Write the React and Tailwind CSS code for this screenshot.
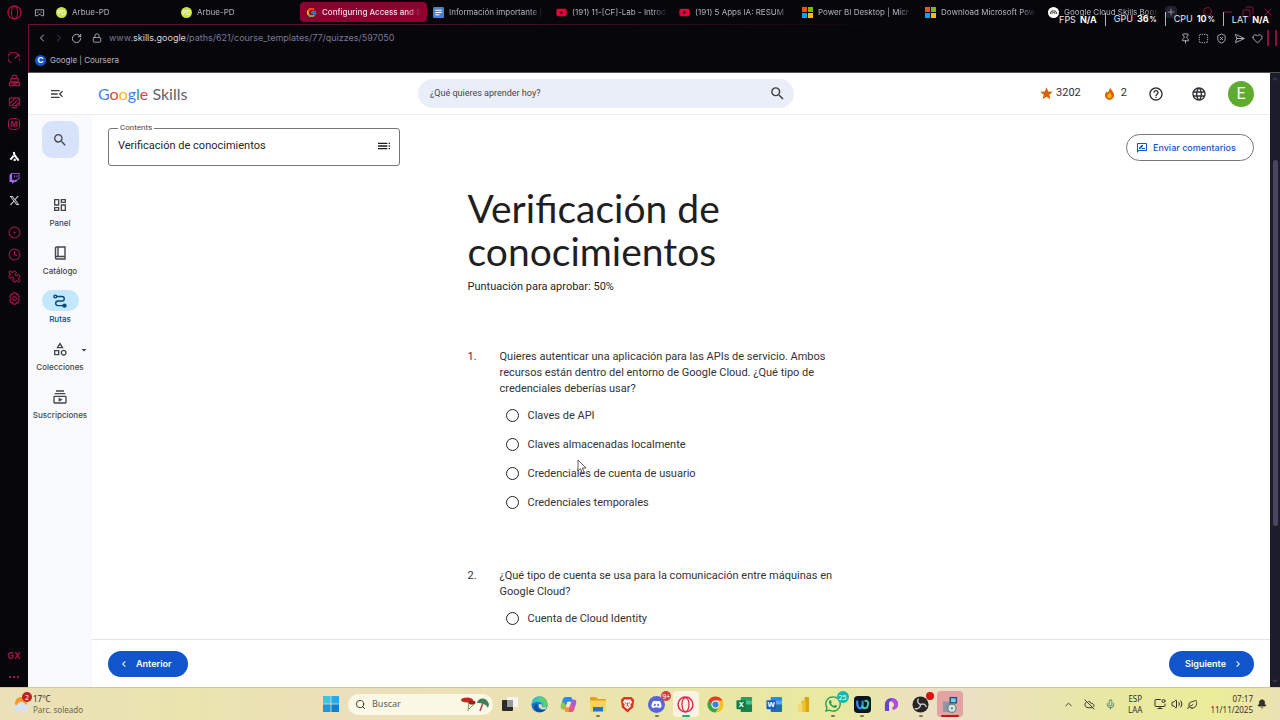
import React, { useState } from "react";
import { FcGoogle } from "react-icons/fc";
import {
  FaDiscord,
  FaWhatsapp,
  FaTwitch,
  FaXTwitter,
  FaYoutube,
} from "react-icons/fa6";
import {
  MdMenuOpen,
  MdSearch,
  MdOutlineDashboard,
  MdOutlineCategory,
  MdOutlineSubscriptions,
  MdOutlineRateReview,
  MdArrowDropDown,
  MdStar,
  MdHelpOutline,
  MdLanguage,
  MdToc,
  MdChevronLeft,
  MdChevronRight,
} from "react-icons/md";
import {
  Bell,
  ChevronDown,
  ChevronLeft,
  ChevronRight,
  ChevronUp,
  CircleDot,
  Clock,
  CloudOff,
  Copy,
  Heart,
  Leaf,
  Lock,
  Mic,
  MonitorDot,
  Minus,
  Pin,
  Plus,
  Puzzle,
  RotateCw,
  Search,
  SendHorizontal,
  Settings,
  ShieldX,
  SquareDashed,
  Volume2,
  X,
} from "lucide-react";

const ArbueIcon = () => (
  <span className="flex h-[11px] w-[11px] shrink-0 items-center justify-center rounded-full bg-[#c9e636] text-[6px] text-white">
    PD
  </span>
);

const DocsIcon = () => (
  <svg viewBox="0 0 12 12" className="h-[11px] w-[11px] shrink-0">
    <rect width="12" height="12" rx="1.5" fill="#4a7fe0" />
    <path d="M2.5 3.5h7M2.5 6h7M2.5 8.5h4.5" stroke="#fff" strokeWidth="1.2" />
  </svg>
);

const YoutubeIcon = () => (
  <FaYoutube className="h-[11px] w-[11px] shrink-0 text-[#e6003a]" />
);

const MicrosoftIcon = () => (
  <svg viewBox="0 0 11 11" className="h-[11px] w-[11px] shrink-0">
    <path fill="#f25022" d="M0 0h5v5H0z" />
    <path fill="#7fba00" d="M6 0h5v5H6z" />
    <path fill="#00a4ef" d="M0 6h5v5H0z" />
    <path fill="#ffb900" d="M6 6h5v5H6z" />
  </svg>
);

const SkillsBoostIcon = () => (
  <svg viewBox="0 0 12 12" className="h-[11px] w-[11px] shrink-0">
    <circle cx="6" cy="6" r="6" fill="#fff" />
    <path
      d="M2.5 7.500a3.500 3.500 0 0 1 7 0M4.300 7.500a1.700 1.700 0 0 1 3.400 0"
      fill="none"
      stroke="#222"
      strokeWidth="1"
    />
  </svg>
);

const OperaIcon = ({ className }) => (
  <svg viewBox="0 0 16 16" className={className} fill="none" stroke="currentColor">
    <circle cx="8" cy="8" r="7" strokeWidth="1.4" />
    <ellipse cx="8" cy="8" rx="3.300" ry="6.600" strokeWidth="1.200" />
  </svg>
);

const tabs = [
  { title: "Arbue-PD", icon: <ArbueIcon />, width: "w-[125px]" },
  { title: "Arbue-PD", icon: <ArbueIcon />, width: "w-[125px]" },
  {
    title: "Configuring Access and S",
    icon: <FcGoogle className="h-[11px] w-[11px] shrink-0" />,
    width: "w-[127px]",
    active: true,
  },
  { title: "Información importante |", icon: <DocsIcon />, width: "w-[123px]" },
  { title: "(191) 11-[CF]-Lab - Introd", icon: <YoutubeIcon />, width: "w-[123px]" },
  { title: "(191) 5 Apps IA: RESUM", icon: <YoutubeIcon />, width: "w-[123px]" },
  { title: "Power BI Desktop | Micr", icon: <MicrosoftIcon />, width: "w-[123px]" },
  { title: "Download Microsoft Pow", icon: <MicrosoftIcon />, width: "w-[123px]" },
  { title: "Google Cloud Skills Boos", icon: <SkillsBoostIcon />, width: "w-[123px]" },
];

const TabBar = () => (
  <div className="flex h-6 items-center">
    <svg
      viewBox="0 0 12 12"
      className="ml-[6px] mr-[5px] h-[11px] w-[11px] shrink-0"
      fill="none"
      stroke="#b5b5bd"
    >
      <path d="M1.500 3h9v6.500H8L6.800 8H5.200L4 9.500H1.500z" />
      <path d="M3.500 5.700h1.500M7 5.700h1.500" />
    </svg>
    {tabs.map((tab, i) => (
      <button
        key={i}
        type="button"
        className={`${tab.width} ${
          tab.active ? "bg-[#8d0030] font-medium text-[#f3dfe6]" : "text-[#b3b3bb]"
        } flex h-5 min-w-0 items-center gap-[5px] overflow-hidden rounded-sm px-[6px] text-[8px]`}
      >
        {tab.icon}
        <span className="min-w-0 flex-1 overflow-hidden whitespace-nowrap text-left [mask-image:linear-gradient(to_right,black_85%,transparent)]">
          {tab.title}
        </span>
      </button>
    ))}
    <button
      type="button"
      aria-label="Nueva pestaña"
      className="flex h-3 w-3 items-center justify-center rounded-sm bg-[#24222f] text-[#a09fae]"
    >
      <Plus className="h-[10px] w-[10px]" />
    </button>
    <div className="ml-auto flex items-center gap-2 pr-[6px] text-[#8d1237]">
      <Search className="h-3 w-3" />
      <Minus className="h-3 w-3" />
      <Copy className="h-3 w-3 -scale-x-100" />
      <X className="h-3 w-3" />
    </div>
  </div>
);

const stats = [
  ["FPS", "N/A"],
  ["GPU", "36", "%"],
  ["CPU", "10", "%"],
  ["LAT", "N/A"],
];

const StatsOverlay = () => (
  <div className="absolute right-[11px] top-3 flex items-center divide-x divide-white/70 text-[9px] leading-[13px] text-[#e8e8ea]">
    {stats.map(([label, value, unit]) => (
      <span key={label} className="flex items-baseline gap-1 px-2 last:pr-0">
        {label}
        <b className="text-white">
          {value}
          {unit && <small className="ml-px text-[7px]">{unit}</small>}
        </b>
      </span>
    ))}
  </div>
);

const AddressBar = () => (
  <div className="flex h-[26px] items-center pl-[7px] pr-[3px] text-[#b9b8c2]">
    <ChevronLeft className="h-3 w-3" />
    <ChevronRight className="ml-[5px] h-3 w-3 text-[#4c4a57]" />
    <RotateCw className="ml-[6px] h-[11px] w-[11px]" />
    <Lock className="ml-[10px] h-[10px] w-[10px]" />
    <p className="ml-[7px] flex-1 text-[9px] text-[#7a7896]">
      www.<span className="text-[#d8d7e0]">skills.google</span>
      /paths/621/course_templates/77/quizzes/597050
    </p>
    <div className="flex items-center gap-[7px]">
      <Pin className="h-[11px] w-[11px]" />
      <SquareDashed className="h-[11px] w-[11px]" />
      <ShieldX className="h-[11px] w-[11px]" />
      <SendHorizontal className="h-[11px] w-[11px]" />
      <Heart className="h-[11px] w-[11px]" />
    </div>
    <span className="ml-1 h-4 w-[2px] bg-[#8d0f3a]" />
    <span className="ml-[6px] h-4 w-[2px] bg-[#8d0f3a]" />
  </div>
);

const BrowserSidebar = () => {
  const cell = "flex h-[22px] items-center justify-center";
  return (
    <aside className="flex w-7 shrink-0 flex-col text-[#a01745]">
      <div className="flex h-6 items-center justify-center">
        <OperaIcon className="h-[15px] w-[15px] text-[#b01040]" />
      </div>
      <div className="mt-[23px]">
        <div className={cell}>
          <svg viewBox="0 0 14 14" className="h-[13px] w-[13px]" fill="none" stroke="currentColor" strokeWidth="1.2">
            <path d="M3.500 11.800A6 6 0 1 1 10 2M7 7l4.500-4M9.500 2.800h2.500v2.500M12.500 7a6 6 0 0 1-.5 2.500" />
          </svg>
        </div>
        <div className={cell}>
          <svg viewBox="0 0 14 14" className="h-[13px] w-[13px]" fill="none" stroke="currentColor" strokeWidth="1.2">
            <path d="M4 5l1-3.500h4L10 5M2.500 5h9M3 5.500v3h8v-3M1.500 12.500V9.500h11v3zM5 11h4" />
          </svg>
        </div>
        <div className={cell}>
          <svg viewBox="0 0 14 14" className="h-[13px] w-[13px]" fill="none" stroke="currentColor" strokeWidth="1.2">
            <rect x="1.500" y="2" width="11" height="8.500" rx="1.500" />
            <path d="M2 8l6-6M4 10.500L12 3M8 10.500l4.500-4M4 12.500h6" />
          </svg>
        </div>
        <div className={cell}>
          <span className="flex h-3 w-3 items-center justify-center rounded-sm border border-current text-[8px] font-bold leading-none">
            M
          </span>
        </div>
      </div>
      <div className="mt-[10px]">
        <div className={cell}>
          <svg viewBox="0 0 12 12" className="h-[11px] w-[11px]" fill="none" stroke="#fff" strokeWidth="2.2">
            <path d="M5.200 1L6 4.500l4.500 6M5 5.200L1.500 9.500M6.200 8.500v2.500" />
          </svg>
        </div>
        <div className={cell}>
          <FaTwitch className="h-[11px] w-[11px] text-[#a76bf5]" />
        </div>
        <div className={cell}>
          <FaXTwitter className="h-[11px] w-[11px] text-[#d0d0d4]" />
        </div>
      </div>
      <div className="mt-[10px]">
        <div className={cell}>
          <CircleDot className="h-[13px] w-[13px]" />
        </div>
        <div className={cell}>
          <Clock className="h-[13px] w-[13px]" />
        </div>
        <div className={cell}>
          <Puzzle className="h-[13px] w-[13px] rotate-90" />
        </div>
        <div className={cell}>
          <svg viewBox="0 0 14 14" className="h-[13px] w-[13px]" fill="none" stroke="currentColor" strokeWidth="1.2">
            <path d="M5.500 1h3l.5 1.600 1.600-.3 1.500 2.600L11 7l1.100 2.100-1.500 2.600-1.600-.3-.5 1.600h-3L5 11.400l-1.600.3-1.500-2.600L3 7 1.900 4.900l1.500-2.600 1.600.3z" />
            <circle cx="7" cy="7" r="2" />
          </svg>
        </div>
      </div>
      <div className="mt-auto text-center">
        <p className="text-[9px] font-bold leading-[22px]">GX</p>
        <div className="flex h-5 items-center justify-center gap-[2px]">
          <span className="h-[2px] w-[2px] bg-current" />
          <span className="h-[2px] w-[2px] bg-current" />
          <span className="h-[2px] w-[2px] bg-current" />
        </div>
      </div>
    </aside>
  );
};

const FlameIcon = () => (
  <svg viewBox="0 0 12 14" className="h-[13px] w-[11px]">
    <path d="M6.500 0C7 3 11 5 11 9a5 5 0 0 1-10 0c0-2 1-3.300 2-4.300l1 1.300C5 4.500 6.500 3 6.500 0z" fill="#d9630c" />
    <path d="M6.200 5.500c.3 1.500 2 2.400 2 4.300a2.300 2.300 0 0 1-4.600 0c0-1.900 2.200-2.500 2.600-4.300z" fill="#fbbc04" />
  </svg>
);

const Header = ({ query, onQueryChange }) => (
  <header className="flex h-[42px] shrink-0 items-center border-b border-[#ececee] bg-white pr-4 text-[#3c4043]">
    <div className="flex w-[390px] items-center">
      <button type="button" aria-label="Menú" className="ml-[21px]">
        <MdMenuOpen className="h-4 w-4" />
      </button>
      <a href="#" className="ml-[33px] font-['Lato',sans-serif] text-[16px] leading-[22px] text-[#5f6368]">
        <span className="text-[#4285f4]">G</span>
        <span className="text-[#ea4335]">o</span>
        <span className="text-[#fbbc04]">o</span>
        <span className="text-[#4285f4]">g</span>
        <span className="text-[#34a853]">l</span>
        <span className="text-[#ea4335]">e</span> Skills
      </a>
    </div>
    <label className="flex h-[29px] w-full max-w-[376px] items-center rounded-full bg-[#e9eef9] pl-3 pr-2">
      <input
        type="text"
        aria-label="Buscar"
        value={query}
        onChange={onQueryChange}
        placeholder="¿Qué quieres aprender hoy?"
        className="min-w-0 flex-1 bg-transparent font-['Roboto',sans-serif] text-[9px] outline-none placeholder:text-[#444746]"
      />
      <MdSearch className="h-[17px] w-[17px]" />
    </label>
    <div className="ml-auto flex items-center font-['Roboto',sans-serif] text-[11px] text-[#303134]">
      <MdStar className="h-[15px] w-[15px] text-[#d9630c]" />
      <span className="ml-[2px] mr-[23px]">3202</span>
      <FlameIcon />
      <span className="ml-[6px] mr-[21px]">2</span>
      <MdHelpOutline className="h-4 w-4" />
      <MdLanguage className="ml-[27px] h-4 w-4" />
      <span className="ml-[21px] flex h-[26px] w-[26px] items-center justify-center rounded-full bg-[#5fab2e] text-[16px] text-white">
        E
      </span>
    </div>
  </header>
);

const BookIcon = () => (
  <svg viewBox="0 0 16 16" className="h-4 w-4" fill="none" stroke="currentColor" strokeWidth="1.4">
    <path d="M3.500 12.500V3a1 1 0 0 1 1-1h8.500v9.500H4.700a1.200 1.200 0 0 0 0 2.500H13v-2.500M6 2v9.500" />
  </svg>
);

const RouteIcon = () => (
  <svg viewBox="0 0 16 16" className="h-4 w-4" fill="none" stroke="currentColor" strokeWidth="1.4">
    <path d="M4.500 3.500h5.500a2.200 2.200 0 0 1 0 4.500H6a2.300 2.300 0 0 0 0 4.600h5.500" />
    <circle cx="3.300" cy="3.500" r="1.400" />
    <circle cx="12.500" cy="12.600" r="1.500" fill="currentColor" />
  </svg>
);

const navItems = [
  { label: "Panel", icon: <MdOutlineDashboard className="h-4 w-4" /> },
  { label: "Catálogo", icon: <BookIcon /> },
  { label: "Rutas", icon: <RouteIcon />, active: true },
  { label: "Colecciones", icon: <MdOutlineCategory className="h-4 w-4" />, menu: true },
  { label: "Suscripciones", icon: <MdOutlineSubscriptions className="h-4 w-4" /> },
];

const NavRail = () => (
  <nav className="flex w-16 shrink-0 flex-col items-center bg-[#f8fafd] pt-[6px] text-[#444746]">
    <button
      type="button"
      aria-label="Buscar"
      className="flex h-[37px] w-[37px] items-center justify-center rounded-[10px] bg-[#d6e3fb]"
    >
      <MdSearch className="h-4 w-4" />
    </button>
    <ul className="mt-9 flex w-full flex-col gap-[13px]">
      {navItems.map((item) => (
        <li key={item.label}>
          <a
            href="#"
            className={`relative flex flex-col items-center gap-[3px] text-[8px] font-medium leading-[11px] ${
              item.active ? "text-[#004a77]" : ""
            }`}
          >
            <span
              className={`flex h-[21px] w-[37px] items-center justify-center rounded-full ${
                item.active ? "bg-[#c2e7ff]" : ""
              }`}
            >
              {item.icon}
            </span>
            {item.label}
            {item.menu && <MdArrowDropDown className="absolute right-[2px] top-[6px] h-3 w-3" />}
          </a>
        </li>
      ))}
    </ul>
  </nav>
);

const questions = [
  {
    text: "Quieres autenticar una aplicación para las APIs de servicio. Ambos recursos están dentro del entorno de Google Cloud. ¿Qué tipo de credenciales deberías usar?",
    options: [
      "Claves de API",
      "Claves almacenadas localmente",
      "Credenciales de cuenta de usuario",
      "Credenciales temporales",
    ],
  },
  {
    text: "¿Qué tipo de cuenta se usa para la comunicación entre máquinas en Google Cloud?",
    options: ["Cuenta de Cloud Identity"],
  },
];

const Question = ({ number, question, answer, onAnswer }) => (
  <li className="flex">
    <span className="w-8 shrink-0">{number}.</span>
    <fieldset className="max-w-[344px]">
      <legend>{question.text}</legend>
      <div className="mt-1 pl-[6px]">
        {question.options.map((option) => (
          <label key={option} className="flex h-[29px] items-center gap-[9px]">
            <input
              type="radio"
              name={`question-${number}`}
              value={option}
              checked={answer === option}
              onChange={() => onAnswer(option)}
              className="h-[13px] w-[13px] appearance-none rounded-full border border-[#222] checked:border-4 checked:border-[#1155cc]"
            />
            {option}
          </label>
        ))}
      </div>
    </fieldset>
  </li>
);

const Quiz = () => {
  const [answers, setAnswers] = useState({});

  const handleAnswer = (index, option) => {
    setAnswers((prev) => ({ ...prev, [index]: option }));
  };

  return (
    <main className="grid min-h-0 flex-1 grid-cols-[1fr_427px_1fr] overflow-hidden px-4 font-['Roboto',sans-serif]">
      <div className="pt-[7px]">
        <fieldset className="h-[44px] w-[292px] rounded-[3px] border border-[#747775] pl-[9px] pr-[7px] text-[11px] text-[#1f1f1f]">
          <legend className="px-[2px] text-[8px] leading-[12px] text-[#444746]">Contents</legend>
          <button type="button" className="flex h-6 w-full items-center justify-between">
            Verificación de conocimientos
            <MdToc className="h-4 w-4" />
          </button>
        </fieldset>
      </div>
      <div className="pt-[72px] text-[#1f1f1f]">
        <h1 className="font-['Lato',sans-serif] text-[39px] leading-[43px]">
          Verificación de conocimientos
        </h1>
        <p className="mt-[6px] text-[11px] leading-4">Puntuación para aprobar: 50%</p>
        <ol className="mt-[54px] flex flex-col gap-[51px] text-[11px] leading-4 text-[#333]">
          {questions.map((question, i) => (
            <Question
              key={i}
              number={i + 1}
              question={question}
              answer={answers[i]}
              onAnswer={(option) => handleAnswer(i, option)}
            />
          ))}
        </ol>
      </div>
      <div className="pt-[19px]">
        <button
          type="button"
          className="ml-auto flex h-[27px] w-32 items-center gap-[5px] rounded-full border border-[#747775] pl-[9px] font-['Inter',sans-serif] text-[9px] font-medium text-[#1155cc]"
        >
          <MdOutlineRateReview className="h-3 w-3" />
          Enviar comentarios
        </button>
      </div>
    </main>
  );
};

const PageFooter = () => (
  <footer className="flex h-12 shrink-0 items-center justify-between border-t border-[#e1e3e6] px-4 text-[9px] font-semibold text-white">
    <button type="button" className="flex h-[26px] items-center gap-[6px] rounded-full bg-[#1155cc] pl-[10px] pr-4">
      <MdChevronLeft className="h-3 w-3" />
      Anterior
    </button>
    <button type="button" className="flex h-[26px] items-center gap-[6px] rounded-full bg-[#1155cc] pl-4 pr-[10px]">
      Siguiente
      <MdChevronRight className="h-3 w-3" />
    </button>
  </footer>
);

const Scrollbar = () => (
  <div className="flex w-[10px] shrink-0 flex-col items-center justify-between bg-[#1d1c2b] py-[2px] text-[#6d6a80]">
    <ChevronUp className="h-2 w-2" />
    <span className="mb-[63px] mt-[77px] h-[60%] w-[5px] rounded-full bg-[#4a4660]" />
    <ChevronDown className="mt-auto h-2 w-2" />
  </div>
);

const Badge = ({ className, children }) => (
  <span
    className={`absolute flex items-center justify-center rounded-full text-[7px] leading-none text-white ${className}`}
  >
    {children}
  </span>
);

const OfficeIcon = ({ letter, light, dark }) => (
  <svg viewBox="0 0 18 18" className="h-[17px] w-[17px]">
    <rect x="5" y="1" width="12" height="16" rx="1" fill={light} />
    <path d="M5 5h12v4H5z" fill="#fff" opacity=".25" />
    <path d="M5 9h12v8H5z" fill="#000" opacity=".2" />
    <rect x="0.500" y="4.500" width="10" height="9.500" rx="1" fill={dark} />
    <text x="5.500" y="12" fill="#fff" fontSize="8" fontWeight="bold" textAnchor="middle">
      {letter}
    </text>
  </svg>
);

const taskbarApps = [
  {
    name: "Vista de tareas",
    icon: (
      <svg viewBox="0 0 16 16" className="h-4 w-4">
        <rect x="5" y="1" width="11" height="10" rx="1" fill="#f4f4f2" />
        <rect y="4" width="11" height="11" rx="1" fill="#2b2b2b" />
        <rect x="5" y="4" width="6" height="7" fill="#9a9a9a" />
      </svg>
    ),
  },
  {
    name: "Edge",
    icon: (
      <svg viewBox="0 0 18 18" className="h-[17px] w-[17px]">
        <circle cx="9" cy="9" r="8.500" fill="#1273c9" />
        <path d="M.5 9a8.500 8.500 0 0 1 17-.5c0 3-2.500 4-5 3.500-2-.4-.8-1.500-1-3C11.200 6.500 6 4.500.5 9z" fill="#35c1c9" />
        <path d="M9 .5a8.500 8.500 0 0 1 8.500 8c0 3-2.500 4-5 3.500 3-3 .5-8-6-7z" fill="#5fd068" />
        <path d="M7 8.500c-2 4 2 8 8.500 6-4 4-11 3.300-12-2-.4-2.500 1.500-4 3.500-4z" fill="#0c4fa0" />
        <path d="M11.500 9c.2 1.500-1 2.600 1 3 1.500.3 3 .1 4-.6l-.8 2.200c-4 1.800-9-1-7.200-5.100z" fill="#ebe2b4" />
      </svg>
    ),
  },
  {
    name: "Copilot",
    icon: (
      <svg viewBox="0 0 18 18" className="h-[17px] w-[17px]">
        <path d="M6 1h6l2 5H8l-3 8H3C1 14 .5 12 1 10l2-6.500C3.500 2 4.500 1 6 1z" fill="#2a8be8" />
        <path d="M1 10l2-4 3 3-1 5H3C1 14 .5 12 1 10z" fill="#9bc93a" />
        <path d="M12 17H6l-2-5h6l3-8h2c2 0 2.500 2 2 4l-2 6.500c-.5 1.500-1.500 2.500-3 2.500z" fill="#e8568f" />
        <path d="M17 8l-2 4-3-3 1-5h2c2 0 2.500 2 2 4z" fill="#a45ce0" />
        <path d="M6 17l-2-5h6l-1 5z" fill="#f59a3c" />
        <path d="M8 6h3l-2 6H6z" fill="#f4ecd0" />
      </svg>
    ),
  },
  {
    name: "Explorador",
    running: true,
    icon: (
      <svg viewBox="0 0 18 16" className="h-4 w-[18px]">
        <path d="M1 2a1 1 0 0 1 1-1h5l2 2h7a1 1 0 0 1 1 1v11H1z" fill="#e2a21c" />
        <rect x="1" y="4.500" width="16" height="11" rx="1" fill="#fbd35a" />
        <path d="M4 11h10v4.500H4z" fill="#2079c6" />
      </svg>
    ),
  },
  {
    name: "Brave",
    icon: (
      <svg viewBox="0 0 16 18" className="h-[17px] w-[15px]">
        <path d="M4 1h8l3 3-1 8-6 5.500L2 12 1 4z" fill="#e0341c" />
        <path d="M8 4l3-.5 2 3-2 2.500.5 2L8 14l-3.500-3 .5-2-2-2.500 2-3z" fill="#fff" />
        <path d="M5 7l2 .8M11 7l-2 .8M8 7v3l-1.500 1M8 10l1.500 1" stroke="#e0341c" fill="none" />
      </svg>
    ),
  },
  {
    name: "Discord",
    running: true,
    icon: (
      <span className="flex h-[17px] w-[17px] items-center justify-center rounded-full bg-[#5865d8] text-white">
        <FaDiscord className="h-[11px] w-[11px]" />
      </span>
    ),
    badge: <Badge className="right-0 -top-[1px] h-[10px] w-[10px] bg-[#cf3f46]">9+</Badge>,
  },
  {
    name: "Opera GX",
    current: true,
    icon: <OperaIcon className="h-[17px] w-[17px] text-[#e0274f]" />,
  },
  {
    name: "Chrome",
    icon: (
      <svg viewBox="0 0 18 18" className="h-[17px] w-[17px]">
        <circle cx="9" cy="9" r="8.500" fill="#fbc116" />
        <path d="M1.640 4.750a8.500 8.500 0 0 1 14.720 0H9a4.250 4.250 0 0 0-3.680 6.370z" fill="#e33b2e" />
        <path d="M1.640 4.750A8.500 8.500 0 0 0 9 17.500l3.680-6.380a4.250 4.250 0 0 1-7.360 0z" fill="#2da94f" />
        <circle cx="9" cy="9" r="4.200" fill="#fff" />
        <circle cx="9" cy="9" r="3.300" fill="#3f7fe8" />
      </svg>
    ),
  },
  { name: "Excel", icon: <OfficeIcon letter="X" light="#21a366" dark="#107c41" /> },
  { name: "Word", icon: <OfficeIcon letter="W" light="#2b8ae0" dark="#185abd" /> },
  {
    name: "Power BI",
    icon: (
      <svg viewBox="0 0 14 18" className="h-[17px] w-[13px]">
        <rect x="8" y="1" width="5" height="16" rx="1" fill="#d9a514" />
        <rect x="4.500" y="5" width="5" height="12" rx="1" fill="#edc02f" />
        <rect x="1" y="9" width="5" height="8" rx="1" fill="#f7d96a" />
      </svg>
    ),
  },
  {
    name: "WhatsApp",
    running: true,
    icon: <FaWhatsapp className="h-[18px] w-[18px] text-[#1f9a52]" />,
    badge: <Badge className="-right-[1px] -top-[1px] h-3 w-3 bg-[#14b8b0]">25</Badge>,
  },
  {
    name: "Webex",
    running: true,
    icon: (
      <svg viewBox="0 0 18 18" className="h-[17px] w-[17px]">
        <rect width="18" height="18" rx="4" fill="#0c1420" />
        <path d="M3.500 5c-.5 4 .5 8 3 8s3-4 2.500-8" fill="none" stroke="#2e8cf0" strokeWidth="2.400" />
        <path d="M8.500 10c.5 2 1.500 3 3 3 2.500 0 3.500-3 3.500-6 0-2-2.500-2.500-3.500-1" fill="none" stroke="#2fd0a0" strokeWidth="2.200" />
      </svg>
    ),
  },
  {
    name: "Loop",
    icon: (
      <svg viewBox="0 0 18 18" className="h-[17px] w-[17px]">
        <path d="M2 16V9a7 7 0 1 1 14 0 6 6 0 0 1-6 5.500V11a3 3 0 1 0-3.500-2v7z" fill="#6a3fe0" />
        <path d="M9 2a7 7 0 0 1 7 7 6 6 0 0 1-6 5.500V11a2.800 2.800 0 0 0-1-5z" fill="#b04be8" />
        <path d="M6.500 9.500a2.600 2.600 0 0 1 5.200 0c0 1-.7 2-1.700 2.200V16H6.500z" fill="#efe6c4" />
      </svg>
    ),
  },
  {
    name: "OBS",
    running: true,
    icon: (
      <svg viewBox="0 0 18 18" className="h-[17px] w-[17px]">
        <circle cx="9" cy="9" r="8.500" fill="#262425" />
        <path d="M9 9c-3-1-4-4-2-6M9 9c3-1.500 6 0 6 3M9 9c0 3-3 5.500-6 4" stroke="#c9c9c9" strokeWidth="1.500" fill="none" />
      </svg>
    ),
    badge: <Badge className="right-[2px] top-0 h-2 w-2 bg-[#e01010]" />,
  },
  {
    name: "Instalador",
    alert: true,
    icon: (
      <svg viewBox="0 0 18 18" className="h-[17px] w-[17px]">
        <rect x="1" y="6" width="8" height="11" fill="#8b97a3" />
        <rect x="8" y="1" width="8" height="7" fill="#2b4f78" />
        <rect x="9.500" y="2.500" width="5" height="4" fill="#6ed1f0" />
        <circle cx="10.500" cy="13" r="4.300" fill="#d9e3e8" stroke="#476" />
        <circle cx="10.500" cy="13" r="1.200" fill="#4a8f80" />
      </svg>
    ),
  },
];

const Taskbar = () => (
  <div className="flex h-[33px] shrink-0 items-center border-t border-[#cfc79a] bg-[linear-gradient(to_right,#ebe0b8,#ebe4ae_15%,#ecdfbc_28%,#ebe3b0_45%,#e9eaa0_65%,#ecdfc8_74%,#e8e8a4_86%,#ebed98_95%,#ebe2b4)] font-['Noto_Sans',sans-serif] text-[#33312a]">
    <div className="flex flex-1 items-center pl-[13px]">
      <div className="relative h-5 w-[18px]">
        <svg viewBox="0 0 18 20" className="h-5 w-[18px]">
          <circle cx="8" cy="9" r="6" fill="#f39a28" />
          <path d="M4 17a3 3 0 0 1 0-6 4.500 4.500 0 0 1 8.500-.5A3.300 3.300 0 0 1 13 17z" fill="#d5e2f2" />
        </svg>
        <Badge className="-right-[1px] -top-[2px] h-[10px] w-[10px] bg-[#bf2020]">2</Badge>
      </div>
      <div className="ml-[2px] text-[8px] leading-[11px]">
        <p>17°C</p>
        <p className="text-[#6b6650]">Parc. soleado</p>
      </div>
    </div>
    <div className="flex items-center pl-[5px]">
      <button type="button" aria-label="Inicio" className="flex w-[22px] justify-center">
        <svg viewBox="0 0 16 16" className="h-4 w-4">
          <path d="M0 0h7.600v7.600H0z" fill="#3cc4ee" />
          <path d="M8.400 0H16v7.600H8.400z" fill="#2aa9e6" />
          <path d="M0 8.400h7.600V16H0z" fill="#1e97dc" />
          <path d="M8.400 8.400H16V16H8.400z" fill="#1280ca" />
        </svg>
      </button>
      <label className="ml-[6px] flex h-[21px] w-[145px] items-center rounded-full bg-[#fbf9e6] pl-[7px] pr-[3px]">
        <Search className="h-[11px] w-[11px]" />
        <input
          type="text"
          aria-label="Buscar en Windows"
          placeholder="Buscar"
          className="ml-[6px] min-w-0 flex-1 bg-transparent text-[9px] outline-none placeholder:text-[#5f5c4e]"
        />
        <svg viewBox="0 0 30 16" className="h-4 w-[30px]">
          <path d="M9 5l-1 10M14 8l-5 5" stroke="#7a9a4a" fill="none" />
          <ellipse cx="7" cy="4" rx="6" ry="2.600" fill="#c22a20" />
          <ellipse cx="12" cy="6.500" rx="3.500" ry="2" fill="#a81c1c" />
          <path d="M17 7c1-5 9-7 12 1l-1 4c-2-4-6-5-11-5z" fill="#3f7f5a" />
          <path d="M23 7l-3 8" stroke="#a34a58" strokeWidth="1.500" />
        </svg>
      </label>
      <ul className="ml-[2px] grid w-[470px] grid-cols-[repeat(16,minmax(0,1fr))]">
        {taskbarApps.map((app) => (
          <li key={app.name} className="relative flex h-8 justify-center">
            <button
              type="button"
              aria-label={app.name}
              className={`my-[3px] flex h-[26px] w-[26px] items-center justify-center rounded-sm ${
                app.current ? "bg-[#fbf4e2]" : app.alert ? "bg-[#e3a3a3]" : ""
              }`}
            >
              {app.icon}
            </button>
            {app.badge && <span className="absolute right-0 top-[4px] h-4 w-4">{app.badge}</span>}
            {app.running && <span className="absolute bottom-[3px] h-[2px] w-1 rounded-full bg-[#7d785c]" />}
            {app.current && <span className="absolute bottom-[3px] h-[2px] w-2 rounded-full bg-[#18a99a]" />}
            {app.alert && <span className="absolute bottom-[3px] h-[2px] w-[18px] rounded-full bg-[#c4141c]" />}
          </li>
        ))}
      </ul>
    </div>
    <div className="flex flex-1 items-center justify-end pr-[13px] text-[8px] leading-[11px]">
      <ChevronUp className="h-[11px] w-[11px]" />
      <CloudOff className="ml-[10px] h-[11px] w-[11px]" />
      <Mic className="ml-[10px] h-[11px] w-[11px] text-[#3c7a68]" />
      <p className="ml-3 text-center">
        ESP
        <br />
        LAA
      </p>
      <MonitorDot className="ml-3 h-3 w-3" />
      <Volume2 className="ml-[5px] h-3 w-3" />
      <Leaf className="ml-1 h-[11px] w-[11px]" />
      <p className="ml-3 text-right">
        07:17
        <br />
        11/11/2025
      </p>
      <Bell className="ml-1 h-[10px] w-[10px] fill-current" />
    </div>
  </div>
);

const MousePointer = () => (
  <svg viewBox="0 0 10 15" className="absolute left-[577px] top-[459px] h-[15px] w-[10px]">
    <path d="M1 1v11l2.500-2.300L5.200 14l2-1-1.800-4H9z" fill="#fff" stroke="#333" strokeWidth=".8" />
  </svg>
);

const App = () => {
  const [query, setQuery] = useState("");

  const handleQueryChange = (event) => {
    setQuery(event.target.value);
  };

  return (
    <div className="relative flex h-screen flex-col overflow-hidden bg-white font-['Inter',sans-serif]">
      <div className="flex min-h-0 flex-1 bg-[#07060b]">
        <BrowserSidebar />
        <div className="flex min-w-0 flex-1 flex-col">
          <TabBar />
          <div className="h-px rounded-tl bg-linear-to-r from-[#6b1033] via-[#4a0d26] via-40% to-transparent to-70%" />
          <div className="border-l border-[#6b1033]">
            <AddressBar />
            <div className="flex h-[21px] items-center gap-[4px] pb-[3px] pl-[6px] text-[8px] text-[#b9b8c2]">
              <span className="flex h-[11px] w-[11px] items-center justify-center rounded-full bg-[#1356c4] text-[8px] font-bold text-white">
                C
              </span>
              Google | Coursera
            </div>
          </div>
          <div className="flex min-h-0 flex-1 border-t border-[#55535a]">
            <div className="flex min-w-0 flex-1 flex-col bg-white">
              <Header query={query} onQueryChange={handleQueryChange} />
              <div className="flex min-h-0 flex-1">
                <NavRail />
                <div className="flex min-w-0 flex-1 flex-col">
                  <Quiz />
                  <PageFooter />
                </div>
              </div>
            </div>
            <Scrollbar />
          </div>
        </div>
      </div>
      <Taskbar />
      <StatsOverlay />
      <MousePointer />
    </div>
  );
};

export default App;
